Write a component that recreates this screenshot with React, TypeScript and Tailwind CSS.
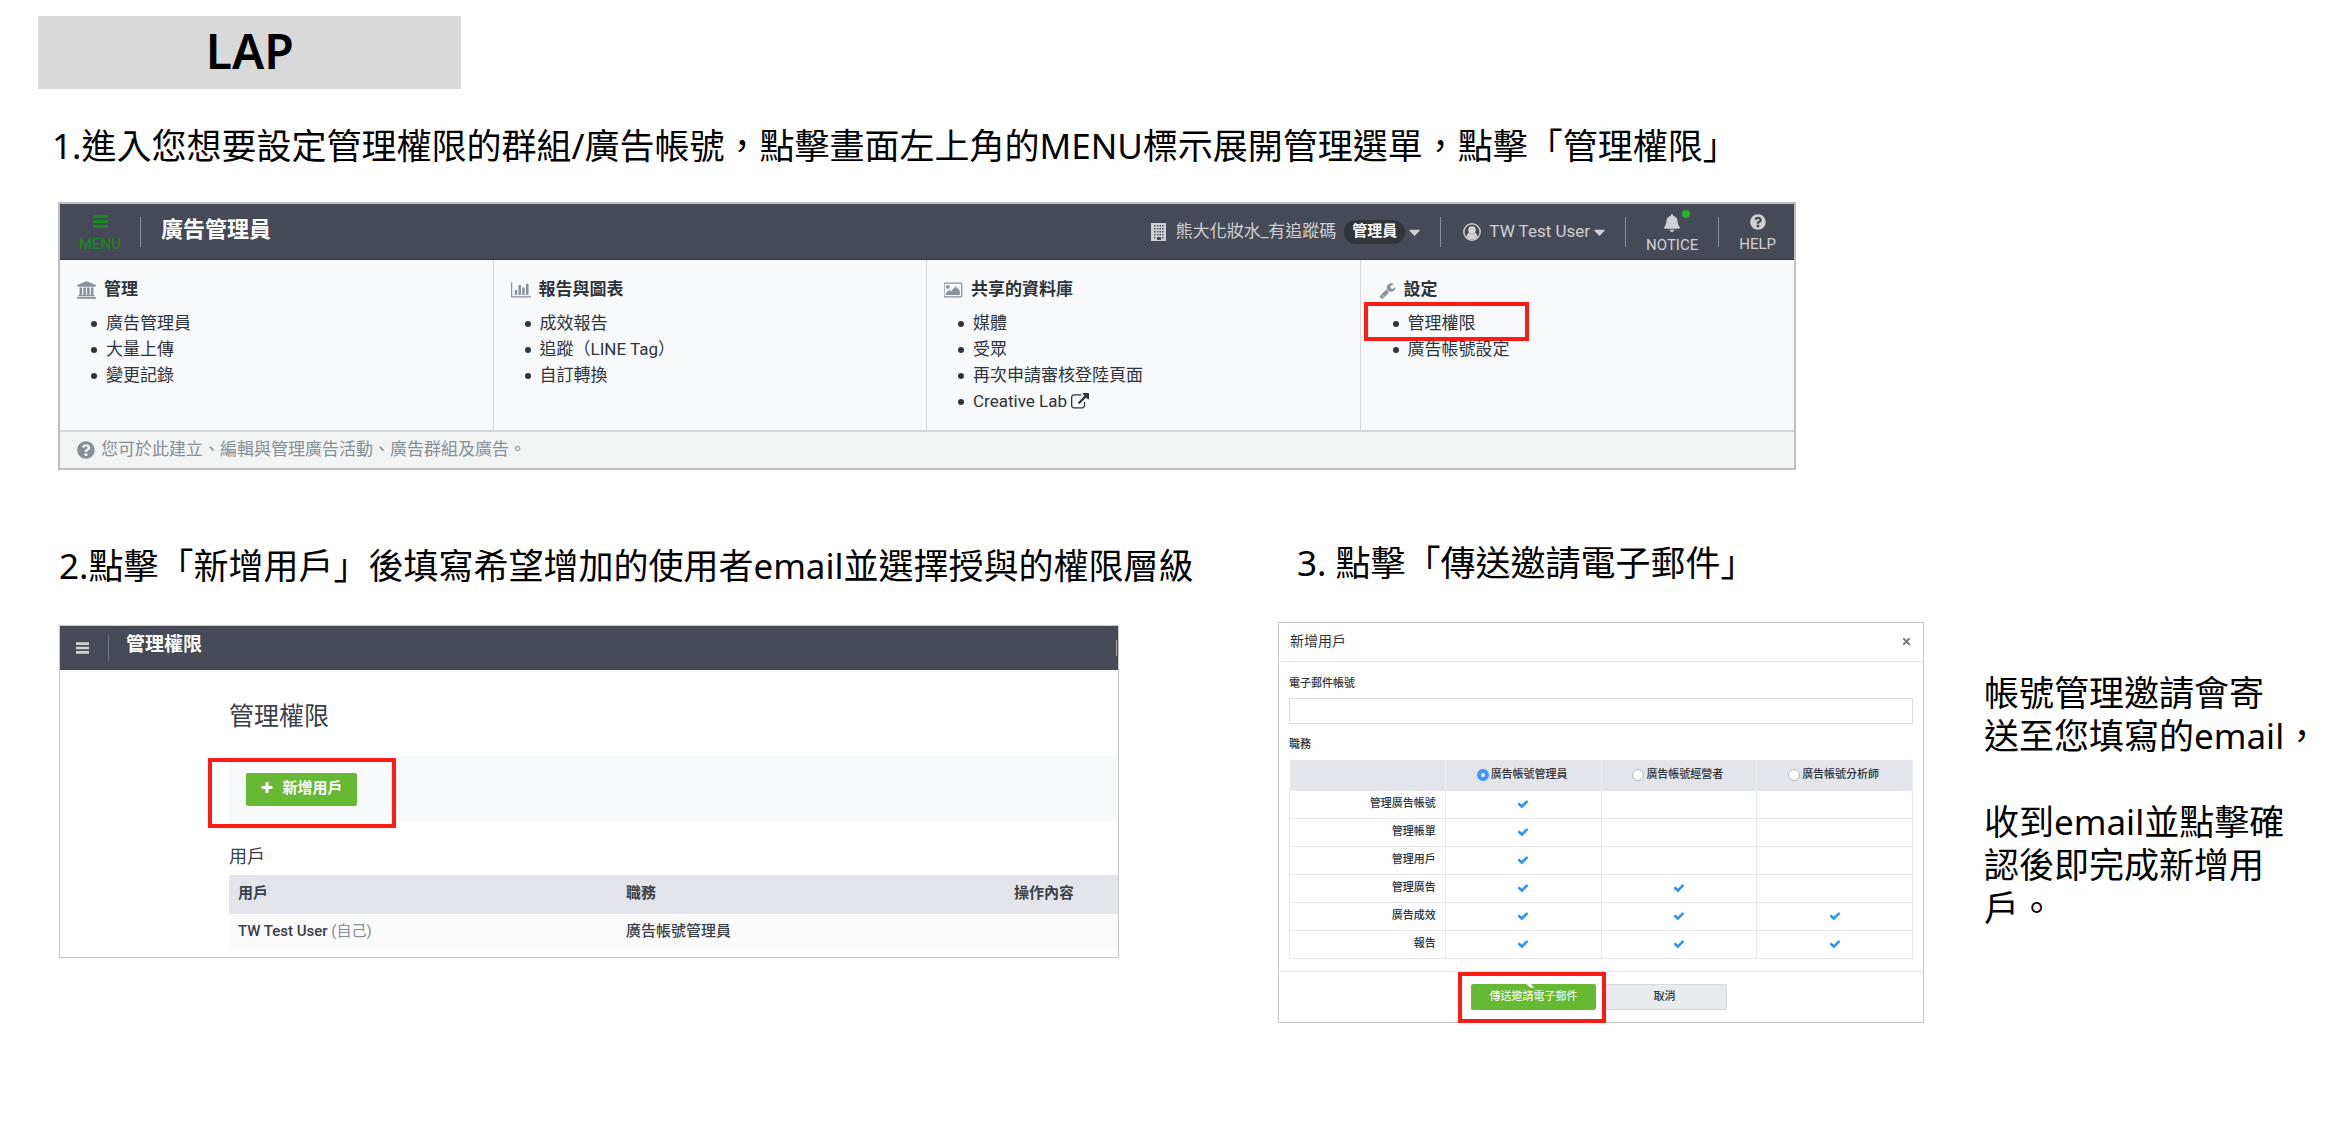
import React from "react";
import { FaBell, FaCaretDown, FaQuestionCircle, FaTimes } from "react-icons/fa";

type GlyphProps = { d: string; w?: number; className?: string };

function Glyph({ d, w = 1792, className }: GlyphProps) {
  return (
    <svg viewBox={`0 0 ${w} 1792`} className={className} fill="currentColor" aria-hidden="true">
      <path d={d} />
    </svg>
  );
}

const BANK =
  "M960 0l960 384v128h-128q0 26-20.5 45t-48.5 19h-1526q-28 0-48.5-19t-20.5-45h-128v-128zm-704 640h256v768h128v-768h256v768h128v-768h256v768h128v-768h256v768h59q28 0 48.5 19t20.5 45v64h-1664v-64q0-26 20.5-45t48.5-19h59v-768zm1595 960q28 0 48.5 19t20.5 45v128h-1920v-128q0-26 20.5-45t48.5-19h1782z";
const CHART =
  "M640 896v512h-256v-512h256zm384-512v1024h-256v-1024h256zm1024 1152v128h-2048v-1536h128v1408h1920zm-640-896v768h-256v-768h256zm384-384v1152h-256v-1152h256z";
const PICTURE =
  "M576 576q0 80-56 136t-136 56-136-56-56-136 56-136 136-56 136 56 56 136zm1024 384v448h-1408v-192l320-320 160 160 512-512zm96-704h-1600q-13 0-22.5 9.5t-9.5 22.5v1216q0 13 9.5 22.5t22.5 9.5h1600q13 0 22.5-9.5t9.5-22.5v-1216q0-13-9.5-22.5t-22.5-9.5zm160 32v1216q0 66-47 113t-113 47h-1600q-66 0-113-47t-47-113v-1216q0-66 47-113t113-47h1600q66 0 113 47t47 113z";
const WRENCH =
  "M448 1472q0-26-19-45t-45-19-45 19-19 45 19 45 45 19 45-19 19-45zm644-420l-682 682q-37 37-90 37-52 0-91-37l-106-108q-38-36-38-90 0-53 38-91l681-681q39 98 114.5 173.5t173.5 114.5zm634-435q0 39-23 106-47 134-164.5 217.5t-258.5 83.5q-185 0-316.5-131.5t-131.5-316.5 131.5-316.5 316.5-131.5q58 0 121.5 16.5t107.5 46.5q16 11 16 28t-16 28l-293 169v224l193 107q5-3 79-48.5t135.5-81 70.5-35.5q15 0 23.5 10t8.5 25z";
const EXTERNAL =
  "M1408 928v320q0 119-84.5 203.5t-203.5 84.5h-832q-119 0-203.5-84.5t-84.5-203.5v-832q0-119 84.5-203.5t203.5-84.5h704q14 0 23 9t9 23v64q0 14-9 23t-23 9h-704q-66 0-113 47t-47 113v832q0 66 47 113t113 47h832q66 0 113-47t47-113v-320q0-14 9-23t23-9h64q14 0 23 9t9 23zm384-864v512q0 26-19 45t-45 19-45-19l-176-176-652 652q-10 10-23 10t-23-10l-114-114q-10-10-10-23t10-23l652-652-176-176q-19-19-19-45t19-45 45-19h512q26 0 45 19t19 45z";
const CHECK =
  "M1671 566q0 40-28 68l-724 724-136 136q-28 28-68 28t-68-28l-136-136-362-362q-28-28-28-68t28-68l136-136q28-28 68-28t68 28l294 295 656-657q28-28 68-28t68 28l136 136q28 28 28 68z";
const PLUS =
  "M1600 736v192q0 40-28 68t-68 28h-416v416q0 40-28 68t-68 28h-192q-40 0-68-28t-28-68v-416h-416q-40 0-68-28t-28-68v-192q0-40 28-68t68-28h416v-416q0-40 28-68t68-28h192q40 0 68 28t28 68v416h416q40 0 68 28t28 68z";

function Bars({ className }: { className?: string }) {
  return (
    <svg viewBox="0 0 15 13" className={className} fill="currentColor" aria-hidden="true">
      <path d="M0 0h15v3H0zM0 5h15v3H0zM0 10h15v3H0z" />
    </svg>
  );
}

function BuildingIcon({ className }: { className?: string }) {
  return (
    <svg viewBox="0 0 15 18" className={className} fill="currentColor" fillRule="evenodd" aria-hidden="true">
      <path d="M0 0h15v18H0zM3 2v1.5h1.5V2zM6 2v1.5h1.300V2zM8.500 2v1.500h1.500V2zM11 2v1.500h1.500V2zM3 5v1.500h1.500V5zM6 5v1.500h1.300V5zM8.500 5v1.500h1.500V5zM11 5v1.500h1.500V5zM3 8v1.500h1.500V8zM6 8v1.500h1.300V8zM8.500 8v1.500h1.500V8zM11 8v1.500h1.500V8zM3 11v1.500h1.500V11zM6 11v1.500h1.300V11zM8.500 11v1.500h1.500V11zM11 11v1.500h1.500V11zM3 14v1.500h1.500V14zM11 14v1.500h1.500V14zM6 14v3h4v-3z" />
    </svg>
  );
}

function UserIcon({ className }: { className?: string }) {
  return (
    <svg viewBox="0 0 18 18" className={className} aria-hidden="true">
      <circle cx="9" cy="9" r="8.200" fill="none" stroke="currentColor" strokeWidth="1.400" />
      <circle cx="9" cy="7" r="3.800" fill="currentColor" />
      <path d="M3.300 13.800c.4-2.400 1.600-3.600 3-3.800 1.700 1.100 3.700 1.100 5.400 0 1.400.2 2.600 1.400 3 3.800-3 3.600-8.400 3.600-11.400 0z" fill="currentColor" />
    </svg>
  );
}

const menu = [
  { title: "管理", icon: <Glyph d={BANK} w={1920} className="h-[18px] w-[19px]" />, items: ["廣告管理員", "大量上傳", "變更記錄"] },
  { title: "報告與圖表", icon: <Glyph d={CHART} w={2048} className="h-[18px] w-5" />, items: ["成效報告", "追蹤（LINE Tag）", "自訂轉換"] },
  { title: "共享的資料庫", icon: <Glyph d={PICTURE} w={1920} className="h-[18px] w-[19px]" />, items: ["媒體", "受眾", "再次申請審核登陸頁面", "Creative Lab"] },
  { title: "設定", icon: <Glyph d={WRENCH} className="h-[17px] w-[17px]" />, items: ["管理權限", "廣告帳號設定"] },
];

const roles = ["廣告帳號管理員", "廣告帳號經營者", "廣告帳號分析師"];
const permissions = [
  { name: "管理廣告帳號", level: 1 },
  { name: "管理帳單", level: 1 },
  { name: "管理用戶", level: 1 },
  { name: "管理廣告", level: 2 },
  { name: "廣告成效", level: 3 },
  { name: "報告", level: 3 },
];

const red = "pointer-events-none absolute border-4 border-[#ff1c14]";
const heading = "whitespace-nowrap text-[35px] leading-[44px]";
const uiFont = "font-[Roboto,'Noto_Sans_CJK_TC',sans-serif]";

function Divider() {
  return <span className="h-[30px] w-px shrink-0 bg-[#8b8e96]" />;
}

function MenuPanel() {
  return (
    <section className={`${uiFont} border-2 border-[#bfbfbf] text-[17px] text-[#2f343c]`}>
      <header className="flex h-14 items-center border-b border-[#353844] bg-[#464a56] text-[#d0d1d4]">
        <button className="flex w-20 flex-col items-center pt-1 text-[#138a1b]">
          <Bars className="h-[13px] w-[15px]" />
          <span className="mt-2 text-[15px] leading-[16px]">MENU</span>
        </button>
        <Divider />
        <h3 className="ml-5 pb-1 text-[22px] font-bold text-white">廣告管理員</h3>
        <div className="ml-auto flex items-center">
          <button className="mr-5 flex items-center">
            <BuildingIcon className="mr-[10px] h-[18px] w-[15px]" />
            <span>熊大化妝水_有追蹤碼</span>
            <span className="ml-2 mr-1 flex h-6 items-center rounded-full bg-[#32363a] px-2 text-[15px] font-bold text-white">管理員</span>
            <FaCaretDown className="h-[18px] w-[11px]" preserveAspectRatio="none" />
          </button>
          <Divider />
          <button className="ml-[22px] mr-5 flex items-center">
            <UserIcon className="mr-2 h-[18px] w-[18px]" />
            <span>TW Test User</span>
            <FaCaretDown className="ml-1 h-[18px] w-[11px]" preserveAspectRatio="none" />
          </button>
          <Divider />
          <button className="relative mx-5 flex flex-col items-center pt-1">
            <FaBell className="h-[18px] w-4" />
            <span className="absolute right-2 top-0 h-2 w-2 rounded-full bg-[#23b42c]" />
            <span className="mt-1 text-[15px] leading-[18px]">NOTICE</span>
          </button>
          <Divider />
          <button className="ml-5 mr-[18px] flex flex-col items-center pt-1">
            <FaQuestionCircle className="h-4 w-4" />
            <span className="mt-1 text-[15px] leading-[20px]">HELP</span>
          </button>
        </div>
      </header>
      <nav className="grid h-[172px] grid-cols-4 border-b-2 border-[#d5d8da] bg-[#f8f9fb]">
        {menu.map((group, g) => (
          <div key={group.title} className={g < 3 ? "border-r border-[#d5d8db] pl-[17px] pt-[17px]" : "pl-[18px] pt-[17px]"}>
            <h4 className="flex h-[26px] items-center gap-2 font-bold">
              <span className="text-[#89919a]">{group.icon}</span>
              {group.title}
            </h4>
            <ul className="mt-2 pl-[14px]">
              {group.items.map((item, i) => (
                <li key={item} className="relative flex h-[26px] items-center">
                  <span className="mr-[9px] h-[6px] w-[6px] rounded-full bg-[#2f343c]" />
                  <a href="#menu" className="flex items-center whitespace-nowrap">
                    {item}
                    {item === "Creative Lab" && <Glyph d={EXTERNAL} className="ml-1 h-[18px] w-[18px]" />}
                  </a>
                  {g === 3 && i === 0 && <span className={`${red} -left-[29px] -top-[9px] h-[39px] w-[165px]`} />}
                </li>
              ))}
            </ul>
          </div>
        ))}
      </nav>
      <p className="flex h-[36px] items-center bg-[#f2f4f4] pl-[17px] text-[#868e96]">
        <FaQuestionCircle className="mr-[6px] h-[18px] w-[18px]" />
        您可於此建立、編輯與管理廣告活動、廣告群組及廣告。
      </p>
    </section>
  );
}

function UsersPanel() {
  return (
    <section className={`${uiFont} border border-[#c8c8c8] pb-[8px] text-[15px] text-[#3b4048]`}>
      <header className="flex h-[44px] items-center bg-[#464a56] text-[#d0d1d4]">
        <button aria-label="選單" className="flex w-12 justify-center pr-1">
          <Bars className="h-3 w-[13px]" />
        </button>
        <span className="h-[26px] w-px bg-[#747780]" />
        <h3 className="ml-[17px] pb-[5px] text-[19px] font-bold text-white">管理權限</h3>
        <span className="ml-auto mr-px h-4 w-px bg-[#a9abb0]" />
      </header>
      <div className="pl-[169px]">
        <h2 className="pt-[27px] text-[25px] leading-[40px]">管理權限</h2>
        <div className="relative mt-[19px] flex h-[66px] items-center bg-[#f8f9fb] pl-[17px]">
          <button className="flex h-[33px] w-[111px] items-center justify-center gap-2 rounded-[2px] bg-[#66b933] pb-[2px] font-bold text-white">
            <Glyph d={PLUS} className="h-[14px] w-[14px]" />
            新增用戶
          </button>
          <span className={`${red} -left-[21px] top-[2px] h-[70px] w-[188px]`} />
        </div>
        <h4 className="mt-[21px] text-[18px] leading-[28px]">用戶</h4>
        <table className="mt-1 w-full table-fixed text-left">
          <colgroup>
            <col className="w-[388px]" />
            <col className="w-[388px]" />
            <col />
          </colgroup>
          <thead>
            <tr className="h-[39px] bg-[#e4e5ea]">
              <th scope="col" className="pb-[2px] pl-[9px]">用戶</th>
              <th scope="col" className="pb-[2px] pl-[9px]">職務</th>
              <th scope="col" className="whitespace-nowrap pb-[2px] pl-[9px]">操作內容</th>
            </tr>
          </thead>
          <tbody>
            <tr className="h-[35px] bg-[#fafafa] font-medium">
              <td className="pl-[9px]">TW Test User <span className="font-normal text-[#868e96]">(自己)</span></td>
              <td className="pl-[9px]">廣告帳號管理員</td>
              <td />
            </tr>
          </tbody>
        </table>
      </div>
    </section>
  );
}

function InvitePanel() {
  return (
    <form onSubmit={(e) => e.preventDefault()} className={`${uiFont} border border-[#c8c8c8] text-[11px] text-[#2f343c]`}>
      <header className="flex h-[39px] items-center justify-between border-b border-[#e6e8ea] px-[11px] pb-px">
        <h3 className="text-[14px]">新增用戶</h3>
        <button type="button" aria-label="關閉" className="text-[#777c83]"><FaTimes className="h-[11px] w-[11px]" /></button>
      </header>
      <div className="px-[10px] pb-[12px] pt-[12px]">
        <label htmlFor="email" className="block leading-[20px] font-medium">電子郵件帳號</label>
        <input id="email" type="email" className="mt-1 block h-[26px] w-full border border-[#dcdee0] px-2 outline-none" />
        <p id="role-label" className="mt-[11px] leading-[20px] font-medium">職務</p>
        <table aria-labelledby="role-label" className="mt-[5px] w-full table-fixed border-collapse">
          <thead>
            <tr className="h-[30px] bg-[#e4e5ea]">
              <td />
              {roles.map((role, i) => (
                <th key={role} scope="col" className="border-x border-[#eceef0] pr-[2px] font-medium">
                  <label className="flex items-center justify-center gap-[2px]">
                    <input
                      type="radio"
                      name="role"
                      defaultChecked={i === 0}
                      className="h-3 w-3 appearance-none rounded-full border border-[#b5b8bd] bg-white checked:border-4 checked:border-[#3b97fb]"
                    />
                    {role}
                  </label>
                </th>
              ))}
            </tr>
          </thead>
          <tbody>
            {permissions.map((p) => (
              <tr key={p.name} className="h-[28px]">
                <th scope="row" className="border border-[#e6e8eb] pr-[9px] text-right font-medium">{p.name}</th>
                {roles.map((role, i) => (
                  <td key={role} className="border border-[#e6e8eb]">
                    {i < p.level && <Glyph d={CHECK} className="mx-auto h-3 w-3 text-[#2f93ef]" />}
                  </td>
                ))}
              </tr>
            ))}
          </tbody>
        </table>
      </div>
      <footer className="flex h-[51px] items-center justify-center gap-[6px] border-t border-[#e6e8ea] pr-1 pt-px">
        <div className="relative">
          <button type="submit" className="block h-[26px] w-[125px] rounded-[2px] bg-[#66b933] text-white">傳送邀請電子郵件</button>
          <svg viewBox="0 0 8 4" className="absolute left-[55px] top-0 h-1 w-2" fill="#fff" aria-hidden="true">
            <path d="M0 0h5l3 4H5z" />
          </svg>
          <span className={`${red} -left-[13px] -top-[12px] z-10 h-[51px] w-[148px]`} />
        </div>
        <button type="button" className="h-[26px] w-[125px] rounded-[1px] border border-[#d8dbde] bg-[#e9ecef] font-medium">取消</button>
      </footer>
    </form>
  );
}

export default function App() {
  return (
    <main lang="zh-Hant" className="min-h-screen bg-white pt-4 font-['Noto_Sans','Noto_Sans_CJK_TC',sans-serif] text-black">
      <h1 className="ml-[38px] flex h-[73px] w-[18%] items-center justify-center bg-[#d9d9d9] pb-1 text-[48px] font-semibold">LAP</h1>
      <h2 className={`${heading} ml-[52px] mt-[35px]`}>
        1.進入您想要設定管理權限的群組/廣告帳號，點擊畫面左上角的MENU標示展開管理選單，點擊「管理權限」
      </h2>
      <div className="mt-[34px] grid grid-cols-[1738fr_556fr] pl-[58px]">
        <MenuPanel />
      </div>
      <div className="mt-[71px] grid grid-cols-[minmax(0,1060fr)_minmax(0,159fr)_minmax(0,646fr)_minmax(0,60fr)_minmax(0,368fr)] pl-[59px]">
        <div className="col-start-1 pt-[3px]">
          <h2 className={`${heading} mb-[37px]`}>2.點擊「新增用戶」後填寫希望增加的使用者email並選擇授與的權限層級</h2>
          <UsersPanel />
        </div>
        <div className="col-start-3">
          <h2 className={`${heading} mb-[37px] pl-[19px]`}>3. 點擊「傳送邀請電子郵件」</h2>
          <InvitePanel />
        </div>
        <p className="col-start-5 whitespace-nowrap pt-[130px] text-[35px] leading-[43px]">
          帳號管理邀請會寄
          <br />
          送至您填寫的email，
          <br />
          <br />
          收到email並點擊確
          <br />
          認後即完成新增用
          <br />
          戶。
        </p>
      </div>
    </main>
  );
}
